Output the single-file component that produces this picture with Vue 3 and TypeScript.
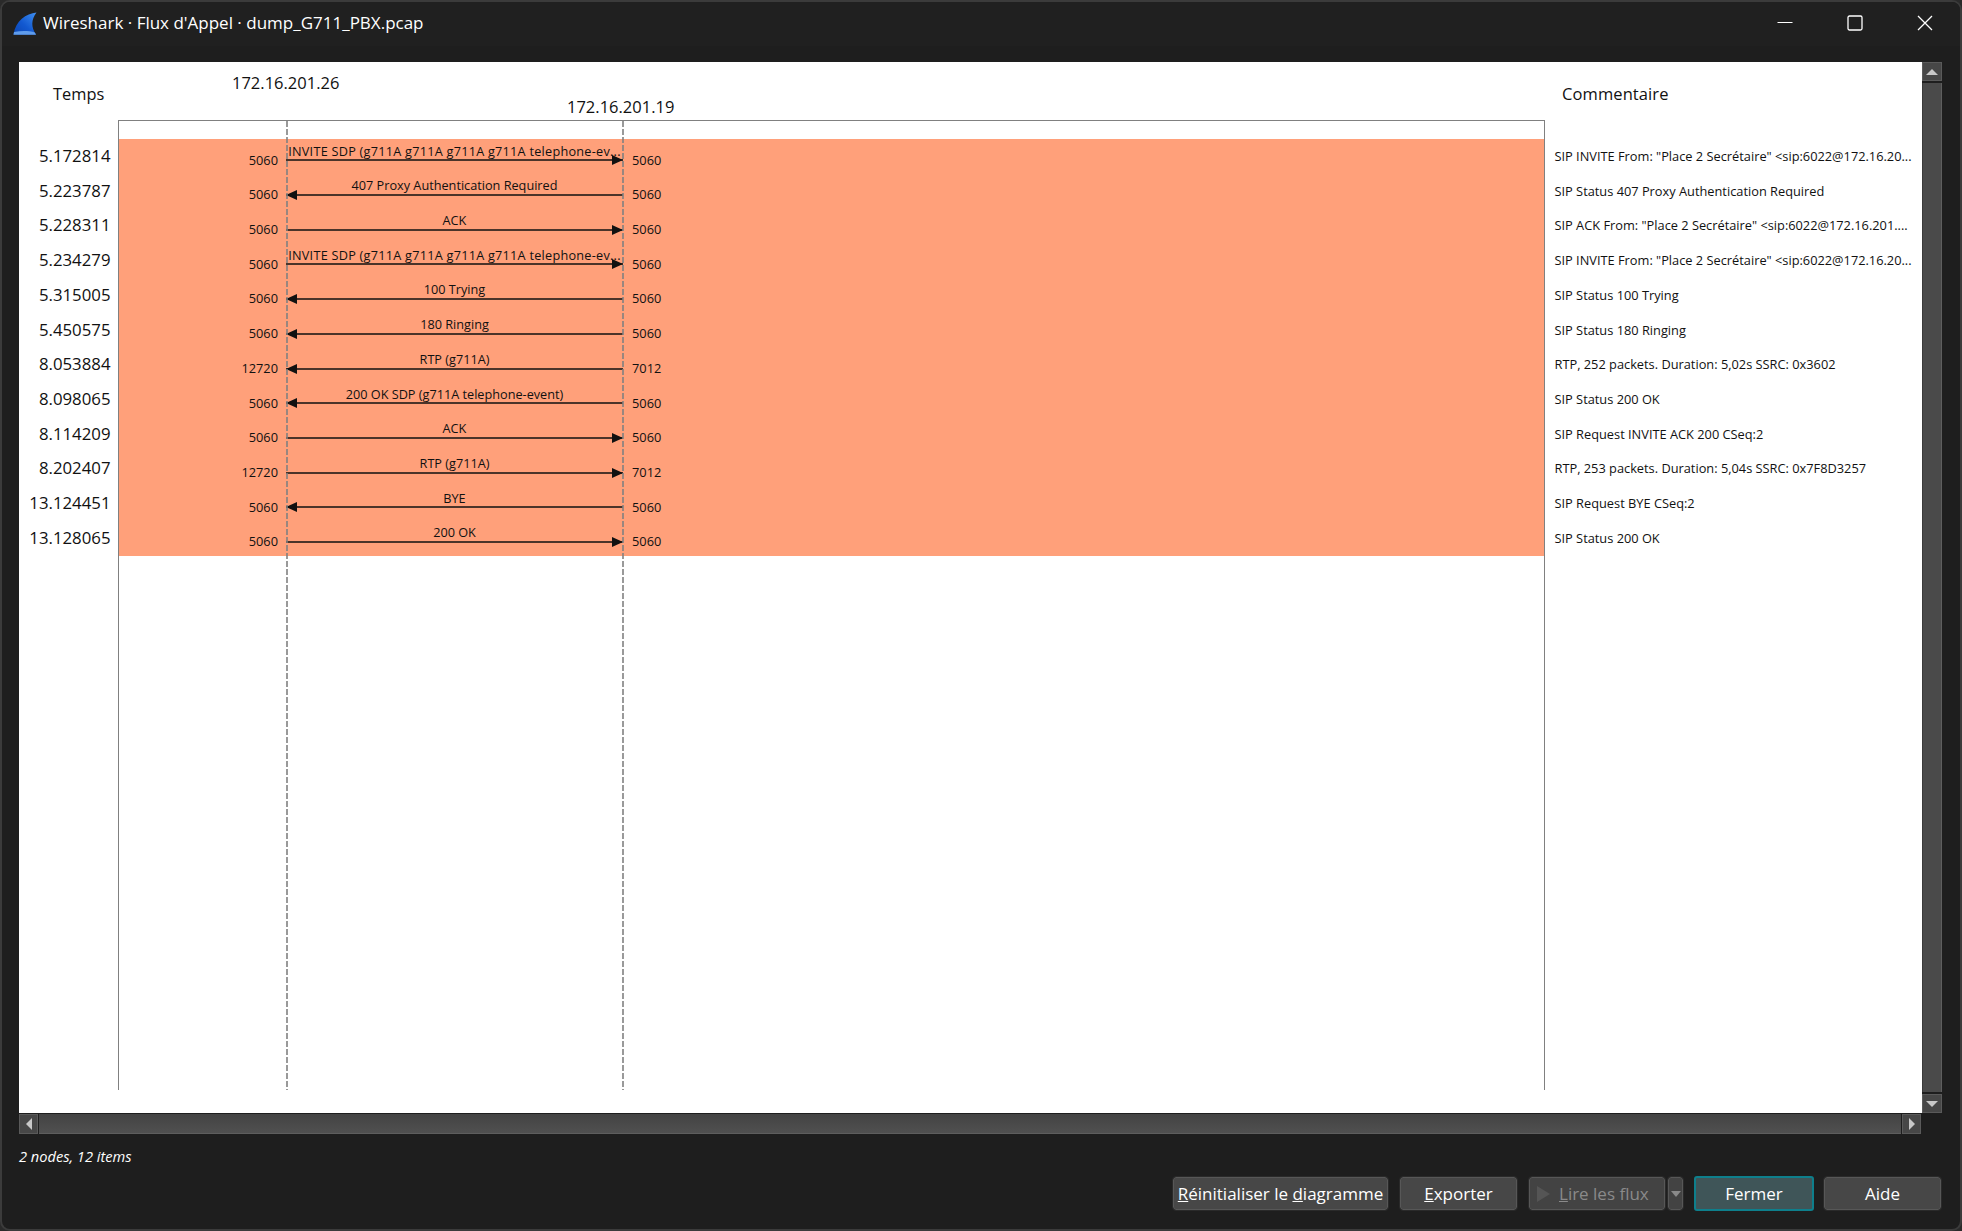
<script setup lang="ts">
interface Row {
  time: string
  label: string
  dir: 'right' | 'left'
  src: string
  dst: string
  comment: string
}

const rows: Row[] = [
  { time: '5.172814', label: 'INVITE SDP (g711A g711A g711A g711A telephone-ev...', dir: 'right', src: '5060', dst: '5060', comment: 'SIP INVITE From: "Place 2 Secrétaire" <sip:6022@172.16.20...' },
  { time: '5.223787', label: '407 Proxy Authentication Required', dir: 'left', src: '5060', dst: '5060', comment: 'SIP Status 407 Proxy Authentication Required' },
  { time: '5.228311', label: 'ACK', dir: 'right', src: '5060', dst: '5060', comment: 'SIP ACK From: "Place 2 Secrétaire" <sip:6022@172.16.201....' },
  { time: '5.234279', label: 'INVITE SDP (g711A g711A g711A g711A telephone-ev...', dir: 'right', src: '5060', dst: '5060', comment: 'SIP INVITE From: "Place 2 Secrétaire" <sip:6022@172.16.20...' },
  { time: '5.315005', label: '100 Trying', dir: 'left', src: '5060', dst: '5060', comment: 'SIP Status 100 Trying' },
  { time: '5.450575', label: '180 Ringing', dir: 'left', src: '5060', dst: '5060', comment: 'SIP Status 180 Ringing' },
  { time: '8.053884', label: 'RTP (g711A)', dir: 'left', src: '12720', dst: '7012', comment: 'RTP, 252 packets. Duration: 5,02s SSRC: 0x3602' },
  { time: '8.098065', label: '200 OK SDP (g711A telephone-event)', dir: 'left', src: '5060', dst: '5060', comment: 'SIP Status 200 OK' },
  { time: '8.114209', label: 'ACK', dir: 'right', src: '5060', dst: '5060', comment: 'SIP Request INVITE ACK 200 CSeq:2' },
  { time: '8.202407', label: 'RTP (g711A)', dir: 'right', src: '12720', dst: '7012', comment: 'RTP, 253 packets. Duration: 5,04s SSRC: 0x7F8D3257' },
  { time: '13.124451', label: 'BYE', dir: 'left', src: '5060', dst: '5060', comment: 'SIP Request BYE CSeq:2' },
  { time: '13.128065', label: '200 OK', dir: 'right', src: '5060', dst: '5060', comment: 'SIP Status 200 OK' },
]
</script>

<template>
  <div class="window">
    <header class="titlebar">
      <svg class="logo" viewBox="0 0 24 23" width="24" height="23">
        <defs>
          <linearGradient id="fin" x1="1" y1="0" x2="0" y2="1">
            <stop offset="0" stop-color="#3f8ff0" />
            <stop offset="0.55" stop-color="#1258d0" />
            <stop offset="1" stop-color="#0c45b0" />
          </linearGradient>
        </defs>
        <path d="M23.5 0.5C13 1.5 2.5 9 0.5 22.5L23 22.5C18 15 18 8 23.5 0.5Z" fill="url(#fin)" />
        <path d="M1 20C8 18.6 16 18.6 21.8 20.4L23 22.8L0.5 22.8Z" fill="#5f9cec" />
      </svg>
      <span class="title">Wireshark · Flux d'Appel · dump_G711_PBX.pcap</span>
      <div class="controls">
        <svg width="16" height="16" viewBox="0 0 16 16"><path d="M0.5 7.5H15.5" stroke="#fff" stroke-width="1.2" fill="none" /></svg>
        <svg width="16" height="16" viewBox="0 0 16 16"><rect x="1" y="1" width="14" height="14" rx="1.5" stroke="#fff" stroke-width="1.3" fill="none" /></svg>
        <svg width="16" height="16" viewBox="0 0 16 16"><path d="M1 1L15 15M15 1L1 15" stroke="#fff" stroke-width="1.3" fill="none" /></svg>
      </div>
    </header>

    <main class="viewport">
      <div class="canvas">
        <div class="head">
          <span class="h-time">Temps</span>
          <div class="h-nodes">
            <span class="node-a">172.16.201.26</span>
            <span class="node-b">172.16.201.19</span>
          </div>
          <span class="h-comment">Commentaire</span>
        </div>
        <div class="body">
          <div class="times">
            <div v-for="r in rows" :key="r.time" class="time">{{ r.time }}</div>
          </div>
          <div class="flow">
            <i class="life life-a"></i>
            <i class="life life-b"></i>
            <div class="flow-gap"></div>
            <div class="flow-rows">
              <div v-for="r in rows" :key="r.time" class="flow-row">
                <span class="port port-l">{{ r.src }}</span>
                <div class="arrow" :class="r.dir">
                  <span class="label" :class="{ long: r.label.length > 40 }">{{ r.label }}</span>
                  <span class="line"></span>
                  <span class="head-tri"></span>
                </div>
                <span class="port port-r">{{ r.dst }}</span>
              </div>
            </div>
          </div>
          <div class="comments">
            <div v-for="r in rows" :key="r.time" class="comment">{{ r.comment }}</div>
          </div>
        </div>
      </div>
      <div class="vbar">
        <span class="sb-btn"><i class="tri up"></i></span>
        <span class="sb-track"></span>
        <span class="sb-btn"><i class="tri down"></i></span>
      </div>
      <div class="hbar">
        <span class="sb-btn-h"><i class="tri lf"></i></span>
        <span class="sb-track-h"></span>
        <span class="sb-btn-h"><i class="tri rt"></i></span>
      </div>
    </main>

    <div class="status">2 nodes, 12 items</div>

    <footer class="actions">
      <button class="btn b-reset"><u>R</u>éinitialiser le <u>d</u>iagramme</button>
      <button class="btn b-export"><u>E</u>xporter</button>
      <div class="split">
        <button class="btn b-play" disabled><i class="play"></i><span><u>L</u>ire les flux</span></button>
        <button class="btn b-drop" disabled><i class="tri down dim"></i></button>
      </div>
      <button class="btn b-close">Fermer</button>
      <button class="btn b-help">Aide</button>
    </footer>
  </div>
</template>

<style>
html, body { margin: 0; background: #2a2a2a; }
</style>

<style scoped>
.window {
  width: 1962px;
  height: 1231px;
  box-sizing: border-box;
  border: 2px solid #3b3b3b;
  border-radius: 10px;
  background: #1e1e1e;
  color: #fff;
  font-family: "Open Sans", "Noto Sans", sans-serif;
  display: flex;
  flex-direction: column;
  overflow: hidden;
}
.titlebar {
  height: 44px;
  flex: none;
  display: flex;
  align-items: center;
  padding-left: 11px;
  background: #202020;
}
.logo { flex: none; margin-top: -1px; }
.title { margin-left: 6px; font-size: 17px; margin-top: -4px; }
.controls {
  margin-left: auto;
  display: flex;
  gap: 54px;
  padding-right: 27px;
  margin-top: -3px;
}
.viewport {
  margin: 16px 0 0 17px;
  width: 1924px;
  display: grid;
  grid-template-columns: 1903px 21px;
  grid-template-rows: 1051px 21px;
}
.canvas { background: #fff; color: #111; overflow: hidden; }
.head {
  height: 58px;
  display: grid;
  grid-template-columns: 99px 1427px 1fr;
  position: relative;
}
.h-time { font-size: 16.4px; padding: 21px 0 0 34px; line-height: 22px; }
.h-nodes { display: flex; flex-direction: column; position: relative; }
.node-a, .node-b { position: absolute; font-size: 16.5px; line-height: 22px; }
.node-a { left: 114px; top: 10px; }
.node-b { left: 449px; top: 34px; }
.h-comment { font-size: 16.5px; padding: 21px 0 0 17px; line-height: 22px; letter-spacing: .1px; }
.body {
  display: grid;
  grid-template-columns: 99px 1427px 1fr;
  height: 970px;
}
.times { padding-top: 19px; }
.time {
  height: 34.72px;
  box-sizing: border-box;
  padding-right: 7.5px;
  text-align: right;
  font-size: 16.8px;
  line-height: 35px;
  position: relative;
  top: -1px;
}
.flow {
  position: relative;
  border: 1px solid #808080;
  border-bottom: none;
  box-sizing: border-box;
}
.flow-gap { height: 18px; }
.flow-rows { background: #ffa07a; }
.life {
  position: absolute;
  top: 0;
  bottom: 0;
  width: 2px;
  z-index: 1;
  background: repeating-linear-gradient(to bottom, #808080 0 6px, transparent 6px 8px);
  opacity: 0.8;
}
.life-a { left: 167px; }
.life-b { left: 503px; }
.flow-row {
  height: 34.72px;
  display: grid;
  grid-template-columns: 167px 337px 1fr;
  position: relative;
}
.port {
  font-size: 12.8px;
  line-height: 16px;
  padding-top: 12.5px;
  color: #111;
}
.port-l { text-align: right; padding-right: 8px; }
.port-r { padding-left: 9px; }
.arrow { position: relative; }
.label {
  position: absolute;
  left: 0;
  right: 0;
  top: 3.5px;
  text-align: center;
  font-size: 12.7px;
  line-height: 17px;
  white-space: nowrap;
  padding: 0 2px;
  box-sizing: border-box;
  overflow: hidden;
}
.label.long { letter-spacing: 0.25px; }
.line {
  position: absolute;
  left: 0;
  right: 0;
  top: 20.3px;
  height: 2px;
  background: #111;
  transform: scaleY(0.75);
}
.head-tri {
  position: absolute;
  top: 16.3px;
  width: 0;
  height: 0;
  border-top: 5px solid transparent;
  border-bottom: 5px solid transparent;
}
.arrow.right .head-tri { right: 0; border-left: 11px solid #111; }
.arrow.left .head-tri { left: 0; border-right: 11px solid #111; }
.comments { padding-top: 19px; }
.comment {
  height: 34.72px;
  font-size: 12.8px;
  line-height: 34px;
  padding-left: 9.5px;
  white-space: nowrap;
}
.vbar {
  grid-column: 2;
  grid-row: 1;
  display: flex;
  flex-direction: column;
  background: #1e1e1e;
  width: 20px;
}
.sb-btn {
  height: 19px;
  box-sizing: border-box;
  flex: none;
  background: #474747;
  border: 1px solid #5a5a5a;
  display: flex;
  align-items: center;
  justify-content: center;
}
.sb-track {
  flex: 1;
  margin: 2px 0;
  background: #4a4a4a;
  border-left: 1px solid #3a3a3a;
  border-right: 1px solid #5e5e5e;
}
.hbar {
  grid-column: 1;
  grid-row: 2;
  display: flex;
  padding-top: 1px;
  margin-right: 1px;
  background: #1e1e1e;
  height: 21px;
  box-sizing: border-box;
}
.sb-btn-h {
  width: 19px;
  box-sizing: border-box;
  flex: none;
  background: #474747;
  border: 1px solid #5a5a5a;
  display: flex;
  align-items: center;
  justify-content: center;
}
.sb-track-h {
  flex: 1;
  margin: 0 1px;
  background: linear-gradient(#434343, #505050);
  border-bottom: 1px solid #5e5e5e;
}
.tri { display: block; width: 0; height: 0; }
.tri.up { border-left: 6px solid transparent; border-right: 6px solid transparent; border-bottom: 6px solid #c8c8c8; }
.tri.down { border-left: 6px solid transparent; border-right: 6px solid transparent; border-top: 6px solid #c8c8c8; }
.tri.lf { border-top: 6px solid transparent; border-bottom: 6px solid transparent; border-right: 6px solid #c8c8c8; }
.tri.rt { border-top: 6px solid transparent; border-bottom: 6px solid transparent; border-left: 6px solid #c8c8c8; }
.tri.dim { border-top-color: #8a8a8a; border-left-width: 5px; border-right-width: 5px; }
.status {
  margin: 12px 0 0 17px;
  font-size: 14.6px;
  font-style: italic;
  line-height: 20px;
}
.actions {
  margin-top: 10px;
  display: flex;
  align-items: center;
  padding-left: 1171px;
}
.btn {
  height: 33px;
  box-sizing: border-box;
  padding: 0;
  border: 1px solid #575757;
  outline: 1px solid #2a2a2a;
  border-radius: 3px;
  background: #474747;
  color: #fff;
  font: 17px "Open Sans", "Noto Sans", sans-serif;
}
.b-reset { width: 215px; }
.b-export { width: 117px; margin-left: 12px; }
.split { display: flex; margin-left: 12px; gap: 3px; }
.b-play {
  width: 136px;
  display: flex;
  align-items: center;
  color: #8a8a8a;
  background: #434343;
}
.b-play span { margin-left: 9px; }
.play {
  margin-left: 7px;
  width: 0;
  height: 0;
  border-top: 8px solid transparent;
  border-bottom: 8px solid transparent;
  border-left: 13px solid #555;
}
.b-drop {
  width: 15px;
  display: flex;
  align-items: center;
  justify-content: center;
  background: #434343;
}
.b-close {
  width: 120px;
  height: 35px;
  margin-left: 11px;
  border: 2px solid #0e7f8c;
  background: #3f5558;
  outline: none;
}
.b-help { width: 117px; margin-left: 10px; }
</style>
